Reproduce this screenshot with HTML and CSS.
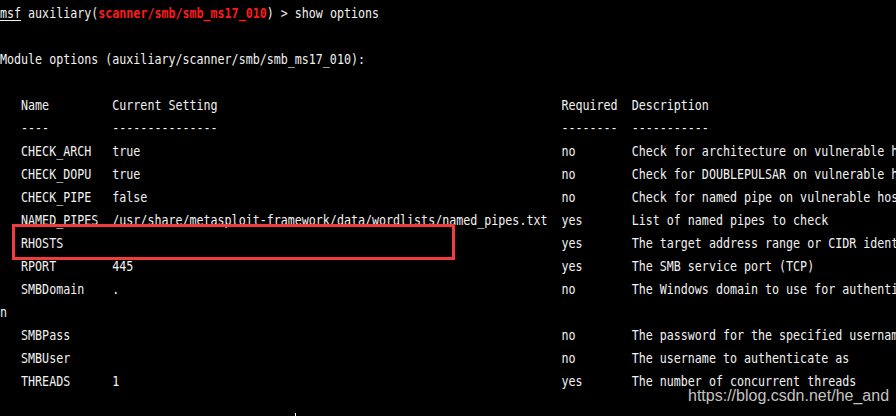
FILE: index.html
```html
<!DOCTYPE html>
<html>
<head>
<meta charset="utf-8">
<link rel="stylesheet" href="styles.css">
</head>
<body>
<div class="screen">
  <div class="term">
    <div class="ln"><span class="prompt">msf</span> auxiliary(<span class="mod">scanner/smb/smb_ms17_010</span>) &gt; show options</div>
    <div class="ln"> </div>
    <div class="ln">Module options (auxiliary/scanner/smb/smb_ms17_010):</div>
    <div class="ln"> </div>
    <div class="ln">   Name         Current Setting                                                 Required  Description</div>
    <div class="ln">   ----         ---------------                                                 --------  -----------</div>
    <div class="ln">   CHECK_ARCH   true                                                            no        Check for architecture on vulnerable hosts</div>
    <div class="ln">   CHECK_DOPU   true                                                            no        Check for DOUBLEPULSAR on vulnerable hosts</div>
    <div class="ln">   CHECK_PIPE   false                                                           no        Check for named pipe on vulnerable hosts</div>
    <div class="ln">   NAMED_PIPES  /usr/share/metasploit-framework/data/wordlists/named_pipes.txt  yes       List of named pipes to check</div>
    <div class="ln">   RHOSTS                                                                       yes       The target address range or CIDR identifier</div>
    <div class="ln">   RPORT        445                                                             yes       The SMB service port (TCP)</div>
    <div class="ln">   SMBDomain    .                                                               no        The Windows domain to use for authenticatio</div>
    <div class="ln">n</div>
    <div class="ln">   SMBPass                                                                      no        The password for the specified username</div>
    <div class="ln">   SMBUser                                                                      no        The username to authenticate as</div>
    <div class="ln">   THREADS      1                                                               yes       The number of concurrent threads</div>
    <div class="ln"> </div>
  </div>
  <div class="highlight"></div>
  <div class="cursor"></div>
  <div class="watermark">https://blog.csdn.net/he_and</div>
</div>
</body>
</html>
```
FILE: styles.css
```css
html, body {
  margin: 0;
  padding: 0;
  background: #000;
  overflow: hidden;
}

.screen {
  position: relative;
  width: 896px;
  height: 416px;
  overflow: hidden;
  background: #000;
}

.term {
  padding-top: 2px;
  width: 1076px;
  font-family: "DejaVu Sans Mono", monospace;
  font-size: 14px;
  line-height: 23px;
  color: #f2f2f2;
  transform: scaleX(0.8327);
  transform-origin: 0 0;
}

.ln {
  height: 23px;
  white-space: pre;
}

.prompt {
  text-decoration: underline;
  text-underline-offset: 2px;
}

.mod {
  color: #ff1a1a;
  font-weight: bold;
}

.highlight {
  position: absolute;
  left: 12px;
  top: 224px;
  width: 443px;
  height: 36px;
  box-sizing: border-box;
  border: 3px solid #f03c3c;
}

.cursor {
  position: absolute;
  left: 295px;
  top: 413px;
  width: 1px;
  height: 3px;
  background: #fff;
}

.watermark {
  position: absolute;
  left: 688px;
  top: 388px;
  font-family: "Liberation Sans", Arial, sans-serif;
  font-size: 16px;
  line-height: 16px;
  color: #c4c4c4;
}
```
